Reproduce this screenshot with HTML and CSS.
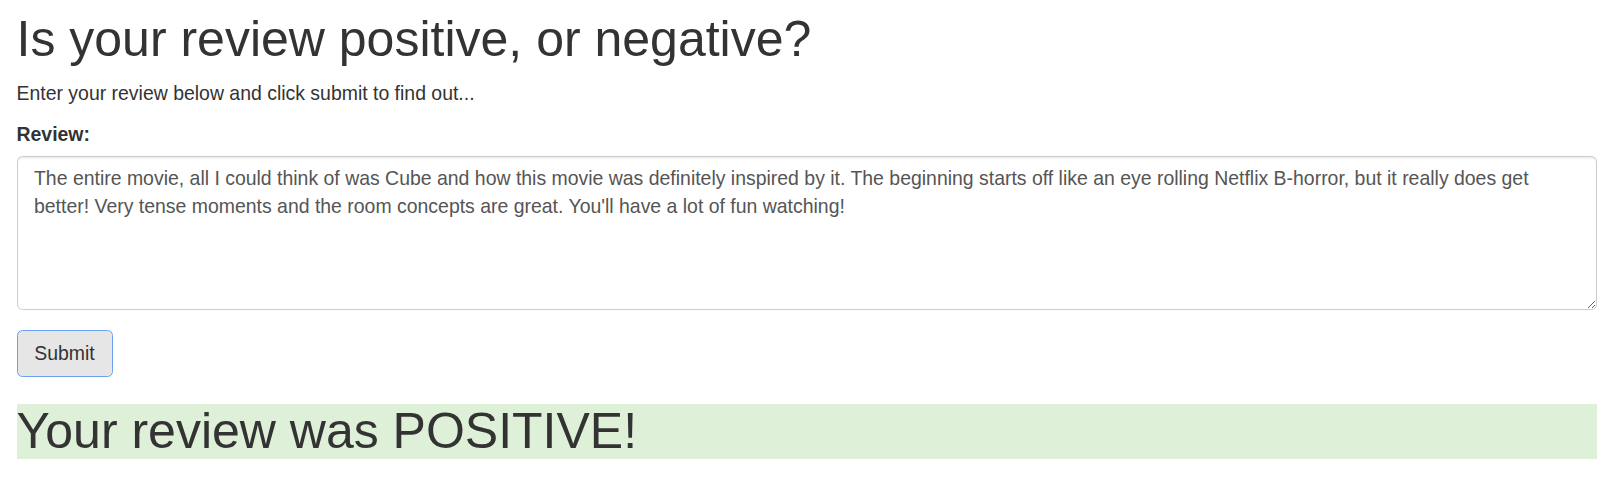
FILE: index.html
```html
<!DOCTYPE html>
<html lang="en">
<head>
<meta charset="utf-8">
<title>Review sentiment</title>
<link rel="stylesheet" href="styles.css">
</head>
<body>
<div class="container">
  <h1 class="title">Is your review positive, or negative?</h1>
  <p class="lead-text">Enter your review below and click submit to find out...</p>
  <form class="review-form">
    <div class="form-group">
      <label class="field-label" for="review">Review:</label>
      <textarea id="review" class="form-control">The entire movie, all I could think of was Cube and how this movie was definitely inspired by it. The beginning starts off like an eye rolling Netflix B-horror, but it really does get better! Very tense moments and the room concepts are great. You'll have a lot of fun watching!</textarea>
    </div>
    <button type="button" class="btn">Submit</button>
  </form>
  <h1 class="result">Your review was POSITIVE!</h1>
</div>
</body>
</html>
```

FILE: styles.css
```css
* { box-sizing: border-box; }
html, body {
  margin: 0;
  padding: 0;
  background: #fff;
}
body {
  font-family: "Liberation Sans", Arial, Helvetica, sans-serif;
  font-size: 19.45px;
  line-height: 27.5px;
  color: #333;
}
.container {
  padding: 0 20px 0 16.5px;
}
.title {
  font-size: 50px;
  font-weight: 400;
  line-height: 54.45px;
  margin: 12px 0 13.75px;
}
.lead-text {
  margin: 0 0 13.75px;
}
.review-form {
  margin: 0;
}
.form-group {
  margin-bottom: 20.6px;
}
.field-label {
  display: inline-block;
  font-weight: 700;
  margin-bottom: 6.9px;
}
.form-control {
  display: block;
  width: 100%;
  height: 154px;
  padding: 8.25px 16.5px;
  font-family: inherit;
  font-size: 19.45px;
  line-height: 27.5px;
  color: #555;
  background: #fff;
  border: 1px solid #ccc;
  border-radius: 5.5px;
  box-shadow: inset 0 1.4px 1.4px rgba(0,0,0,.075);
  resize: vertical;
  margin: 0;
}
.btn {
  display: inline-block;
  height: 46.5px;
  width: 96px;
  padding: 0;
  font-family: inherit;
  font-size: 19.45px;
  line-height: 27.5px;
  color: #333;
  background: #e6e6e6;
  border: 1.4px solid #6aa0ee;
  border-radius: 5.5px;
  margin: 0;
}
.result {
  font-size: 50px;
  font-weight: 400;
  line-height: 54.45px;
  margin: 27.5px 0 0;
  background: #dff0d8;
}
```
